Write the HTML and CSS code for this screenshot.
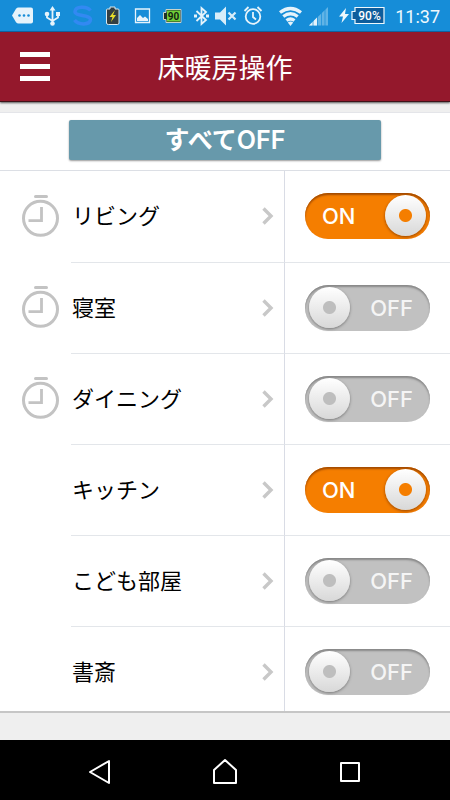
FILE: index.html
```html
<!DOCTYPE html>
<html lang="ja">
<head>
<meta charset="utf-8">
<meta name="viewport" content="width=device-width, initial-scale=1">
<title>床暖房操作</title>
<link rel="stylesheet" href="styles.css">
</head>
<body>
<svg class="symbols" aria-hidden="true">
  <symbol id="timer" viewBox="0 0 38 42">
    <path d="M13.500 1.500h11" fill="none" stroke="#c3c3c3" stroke-width="3" stroke-linecap="round"/>
    <circle cx="18.500" cy="23.300" r="17" fill="none" stroke="#c3c3c3" stroke-width="3"/>
    <path d="M19.500 12v13.700H6.500" fill="none" stroke="#c3c3c3" stroke-width="2.800"/>
  </symbol>
  <symbol id="chevron" viewBox="0 0 12 18">
    <path d="M1.500 1.500L9 9l-7.500 7.500" fill="none" stroke="#c8c8c8" stroke-width="3.400"/>
  </symbol>
</svg>

<header class="status">
  <svg class="slot" viewBox="0 0 30 32"><path d="M5 15.500l4-6.700q1-1.300 2.500-1.300H24q2 0 2 2v12q0 2-2 2H11.500q-1.500 0-2.500-1.300z" fill="#e6f3fb"/><g fill="#168dd8"><circle cx="12.500" cy="15.500" r="1.300"/><circle cx="17" cy="15.500" r="1.300"/><circle cx="21.500" cy="15.500" r="1.300"/></g></svg>
  <svg class="slot" viewBox="0 0 30 32"><g fill="none" stroke="#e6f3fb" stroke-width="1.800"><path d="M15.500 9v14M10 14v3.500l5.500 3.500 5.500-3.500V14"/></g><g fill="#e6f3fb"><path d="M15.500 6l3 4.500h-6zM19 12h4v4h-4z"/><circle cx="10" cy="14" r="2.300"/><circle cx="15.500" cy="23.500" r="2.300"/></g></svg>
  <svg class="slot" viewBox="0 0 30 32"><path d="M23.500 10.500C20 6 8.500 6 8 11.500c-.5 5 15 3 15.500 8C23 25.500 11 25 7.500 20" fill="none" stroke="#3289f2" stroke-width="3.500"/></svg>
  <svg class="slot" viewBox="0 0 30 32"><path d="M13 7h5v2h3q1 0 1 1v13q0 1.500-1.500 1.500h-9Q9.500 24.500 9.500 23V10q0-1 1-1H13z" fill="#333f43" stroke="#d9e9ef"/><path d="M18 10l-5.500 7h3L14 22l5-7h-3z" fill="#e9df29"/></svg>
  <svg class="slot" viewBox="0 0 30 32"><path d="M8.500 9h14v13.500h-14z" fill="none" stroke="#e6f3fb" stroke-width="1.300"/><path d="M10 21v-3l3-3 3 3 2-1.500 3 2.500v2z" fill="#e6f3fb"/></svg>
  <svg class="slot" viewBox="0 0 30 32"><path d="M9 9.500h15v13H9v-3H6.500v-7H9z" fill="#203028" stroke="#c8d4ca"/><path d="M10 10.500h13v11H10z" fill="#71cf38"/><text class="charge" x="16.500" y="19.500">90</text></svg>
  <svg class="bluetooth" viewBox="0 0 28 32"><path d="M9.500 11l9.500 9-4.500 4V8l4.500 4-9.500 9" fill="none" stroke="#e6f3fb" stroke-width="1.800"/><path d="M7 14.500h3v3H7zM19 14.500h3v3h-3z" fill="#e6f3fb"/></svg>
  <svg class="mute" viewBox="0 0 22 32"><path d="M0 12.500h5l6-6v19l-6-6H0z" fill="#d8edf9"/><path d="M13.500 12.500l7 7m0-7l-7 7" stroke="#d8edf9" stroke-width="2.200"/></svg>
  <svg class="alarm" viewBox="0 0 32 32"><g fill="none" stroke="#e6f3fb" stroke-width="1.800"><circle cx="16" cy="16.500" r="7.300"/><path d="M16 12v5l3 2.500M7.500 11l4-4M24.500 11l-4-4"/></g></svg>
  <svg class="wifi" viewBox="0 0 26 32"><g fill="none" stroke="#e6f3fb" stroke-width="3.300"><path d="M4 12.500q10.500-8 21 0M7.300 16.500q7.200-5.500 14.400 0M10.500 20.500q4-3 8 0"/></g><path d="M11.800 22.500q2.700-2 5.400 0L14.500 26z" fill="#e6f3fb"/></svg>
  <svg class="signal" viewBox="0 0 22 32"><path d="M20 7v18.500H1z" fill="#61b4e6"/><path d="M9 17.500v8H1z" fill="#e6f3fb"/><path d="M5 20v6M9.500 16v10M13.500 12v14M17 9v17" stroke="#168dd8" stroke-width=".7"/></svg>
  <svg class="bolt" viewBox="0 0 12 32"><path d="M8 8L1 16.500h4L3.500 23 11 14H7z" fill="#eef8fd"/></svg>
  <svg class="battery" viewBox="0 0 34 32"><path d="M4 7.500h29v16H4v-4H1v-8h3z" fill="#0e5d9c" stroke="#eef8fd" stroke-width="1.200"/><text class="percent" x="18.500" y="20">90%</text></svg>
  <time class="clock">11:37</time>
</header>

<div class="titlebar">
  <button class="menu" aria-label="メニュー"><i></i><i></i><i></i></button>
  <h1>床暖房操作</h1>
</div>

<main>
  <div class="all"><button class="all-off">すべてOFF</button></div>
  <ul class="rooms">
    <li class="room">
      <svg class="timer"><use href="#timer"/></svg>
      <a class="name" href="#living">リビング<svg class="chevron"><use href="#chevron"/></svg></a>
      <div class="control"><label class="switch"><input type="checkbox" checked aria-label="リビング"><span class="on">ON</span><span class="off">OFF</span></label></div>
    </li>
    <li class="room">
      <svg class="timer"><use href="#timer"/></svg>
      <a class="name" href="#bedroom">寝室<svg class="chevron"><use href="#chevron"/></svg></a>
      <div class="control"><label class="switch"><input type="checkbox" aria-label="寝室"><span class="on">ON</span><span class="off">OFF</span></label></div>
    </li>
    <li class="room">
      <svg class="timer"><use href="#timer"/></svg>
      <a class="name" href="#dining">ダイニング<svg class="chevron"><use href="#chevron"/></svg></a>
      <div class="control"><label class="switch"><input type="checkbox" aria-label="ダイニング"><span class="on">ON</span><span class="off">OFF</span></label></div>
    </li>
    <li class="room">
      <a class="name" href="#kitchen">キッチン<svg class="chevron"><use href="#chevron"/></svg></a>
      <div class="control"><label class="switch"><input type="checkbox" checked aria-label="キッチン"><span class="on">ON</span><span class="off">OFF</span></label></div>
    </li>
    <li class="room">
      <a class="name" href="#kids">こども部屋<svg class="chevron"><use href="#chevron"/></svg></a>
      <div class="control"><label class="switch"><input type="checkbox" aria-label="こども部屋"><span class="on">ON</span><span class="off">OFF</span></label></div>
    </li>
    <li class="room">
      <a class="name" href="#study">書斎<svg class="chevron"><use href="#chevron"/></svg></a>
      <div class="control"><label class="switch"><input type="checkbox" aria-label="書斎"><span class="on">ON</span><span class="off">OFF</span></label></div>
    </li>
  </ul>
</main>

<nav class="system">
  <button aria-label="戻る"><svg viewBox="0 0 30 30"><path d="M24 4v22L5 15z" fill="none" stroke="#fff" stroke-width="2" stroke-linejoin="round"/></svg></button>
  <button aria-label="ホーム"><svg viewBox="0 0 30 30"><path d="M4 26V13L15 3l11 10v13z" fill="none" stroke="#fff" stroke-width="2" stroke-linejoin="round"/></svg></button>
  <button aria-label="履歴"><svg viewBox="0 0 30 30"><path d="M6 6h18v18H6z" fill="none" stroke="#fff" stroke-width="2" stroke-linejoin="round"/></svg></button>
</nav>
</body>
</html>
```
FILE: styles.css
```css
* { box-sizing: border-box; }

body {
  margin: 0;
  min-height: 100vh;
  display: flex;
  flex-direction: column;
  background: #efefef;
  color: #000;
  font-family: "Noto Sans CJK JP", sans-serif;
}

button {
  padding: 0;
  border: 0;
  background: none;
  font: inherit;
  color: inherit;
}

.symbols { position: absolute; width: 0; height: 0; }

/* Status bar */
.status {
  display: flex;
  height: 32px;
  padding: 0 10px 0 7px;
  background: #168dd8;
  border-bottom: 1px solid #0b62a5;
}
.status svg { height: 32px; flex: none; }
.slot { width: 30px; }
.bluetooth { width: 28px; }
.mute { width: 22px; }
.alarm { width: 32px; }
.wifi { width: 26px; margin-left: auto; }
.signal { width: 22px; margin-left: 6px; }
.bolt { width: 12px; margin-left: 8px; }
.battery { width: 34px; margin: 0 10px 0 1px; }
.charge { font: bold 10px Roboto, sans-serif; text-anchor: middle; fill: #112211; }
.percent { font: 500 12px Roboto, sans-serif; text-anchor: middle; fill: #fff; }
.clock { font: 18px/33px Roboto, sans-serif; color: #eef8fd; }

/* Title bar */
.titlebar {
  position: relative;
  z-index: 1;
  display: grid;
  grid-template-columns: 90px 1fr 90px;
  align-items: center;
  height: 70px;
  background: #94182c;
  border-bottom: 1px solid #3f1219;
  box-shadow: 0 1px 2px #555;
}
.menu {
  display: grid;
  gap: 7px;
  width: 30px;
  margin-left: 20px;
}
.menu i { height: 5px; background: #fff; }
h1 {
  margin: 0;
  text-align: center;
  font-size: 27px;
  line-height: 40px;
  font-weight: 400;
  color: #fff;
}

/* Content */
main {
  margin-top: 10px;
  background: #fff;
  border-bottom: 2px solid #c6c6c6;
}
.all {
  display: flex;
  justify-content: center;
  padding: 7px 69px 10px;
  border-top: 1px solid #e4e5e9;
  border-bottom: 1px solid #dcdfe5;
}
.all-off {
  flex: 1;
  height: 40px;
  border-radius: 2px;
  background: #6799ab;
  box-shadow: 0 1px 2px #999;
  color: #fff;
  font: 600 25px/40px Inter, "Noto Sans CJK JP", sans-serif;
}
.rooms { margin: 0; padding: 0; list-style: none; }
.room {
  display: grid;
  grid-template-columns: 71px 1fr 166px;
  height: 91px;
}
.room:last-child { height: 85px; }
.timer { width: 38px; height: 42px; margin: 24px 0 0 22px; }
.name {
  grid-column: 2;
  display: flex;
  justify-content: space-between;
  padding: 22px 10px 0 1px;
  color: inherit;
  text-decoration: none;
  font-size: 22px;
  line-height: 42px;
}
.chevron { width: 12px; height: 18px; margin-top: 14px; }
.control {
  padding: 22px 20px 0;
  border-left: 1px solid #d9dce5;
}
.room + .room .name,
.room + .room .control { border-top: 1px solid #e3e6ea; }

/* Switch */
.switch {
  display: flex;
  align-items: center;
  justify-content: space-between;
  height: 46px;
  padding: 0 17px 0 4px;
  border-radius: 23px;
  background: #c1c1c1;
  box-shadow: inset 0 2px 2px #888;
  color: #f5f5f5;
  font: 500 22px/46px Inter, sans-serif;
}
.switch input {
  appearance: none;
  width: 41px;
  height: 41px;
  margin: 0 0 1px;
  border-radius: 50%;
  background:
    radial-gradient(circle, #bebebe 6px, transparent 7px),
    linear-gradient(#fff, #d8d8d8);
  box-shadow: 0 1px 3px #777;
}
.switch .on { display: none; }
.switch:has(input:checked) {
  flex-direction: row-reverse;
  padding: 0 4px 0 17px;
  background: #f57e00;
  box-shadow: inset 0 2px 2px #a34b00;
  color: #fff;
}
.switch input:checked {
  background:
    radial-gradient(circle, #f57e00 6px, transparent 7px),
    linear-gradient(#fff, #d8d8d8);
  box-shadow: 0 1px 3px #944400;
}
.switch:has(input:checked) .on { display: inline; }
.switch:has(input:checked) .off { display: none; }

/* System navigation */
.system {
  display: flex;
  justify-content: center;
  gap: 33px;
  height: 60px;
  margin-top: auto;
  padding: 0 20px;
  background: #000;
}
.system button { width: 92px; display: grid; place-items: center; }
.system svg { width: 30px; height: 30px; margin-top: 4px; }
```
